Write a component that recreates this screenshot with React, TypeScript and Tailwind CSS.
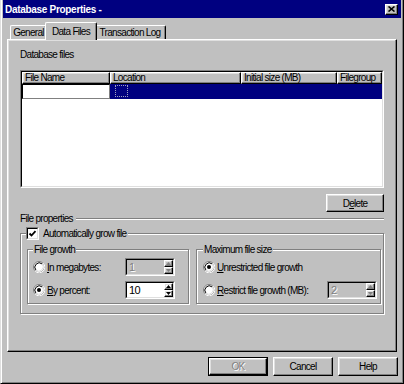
import React from 'react'

const raised =
  'border border-t-white border-l-white border-r-black border-b-black shadow-[inset_-1px_-1px_#808080,inset_1px_1px_#dfdfdf]'
const font = "font-['Liberation_Sans',Arial,sans-serif] text-[10px] tracking-[-0.7px] text-black"

function Radio({ checked }: { checked?: boolean }) {
  return (
    <svg width="12" height="12" viewBox="0 0 12 12" className="shrink-0">
      <circle cx="6" cy="6" r="5.5" fill="white" stroke="#808080" />
      <path d="M10.2 2.2 A5.5 5.5 0 0 1 2.2 10.2" fill="none" stroke="white" />
      <path d="M2.9 9.1 A4.4 4.4 0 0 1 9.1 2.9" fill="none" stroke="black" />
      <path d="M9.1 2.9 A4.4 4.4 0 0 1 2.9 9.1" fill="none" stroke="#dfdfdf" />
      {checked && <circle cx="6" cy="6" r="2" fill="black" />}
    </svg>
  )
}

function Checkbox() {
  return (
    <div className="w-[13px] h-[13px] border border-t-[#808080] border-l-[#808080] border-r-white border-b-white shrink-0">
      <div className="w-full h-full bg-white border border-t-black border-l-black border-r-[#dfdfdf] border-b-[#dfdfdf] flex items-center justify-center">
        <svg width="9" height="9" viewBox="0 0 9 9">
          <path d="M1.5 4.5 L3.5 6.5 L7.5 2.2" fill="none" stroke="black" strokeWidth="1.8" />
        </svg>
      </div>
    </div>
  )
}

function Arrow({ up, disabled }: { up?: boolean; disabled?: boolean }) {
  return (
    <div className={`flex-1 flex items-center justify-center ${raised}`}>
      <svg width="5" height="3" viewBox="0 0 5 3">
        <path d={up ? 'M2.5 0 L5 3 L0 3 Z' : 'M0 0 L5 0 L2.5 3 Z'} fill={disabled ? '#808080' : 'black'} />
      </svg>
    </div>
  )
}

function Spin({ value, disabled, width }: { value: string; disabled?: boolean; width: string }) {
  return (
    <div className={`${width} h-[18px] flex border border-t-[#808080] border-l-[#808080] border-r-white border-b-white`}>
      <div
        className={`flex-1 flex border border-t-black border-l-black border-r-[#dfdfdf] border-b-[#dfdfdf] ${
          disabled ? 'bg-[#c0c0c0]' : 'bg-white'
        }`}
      >
        <span
          className={`flex-1 pl-[2px] leading-[14px] text-[11px] ${
            disabled ? 'text-[#808080] [text-shadow:1px_1px_0_#fff]' : 'text-black'
          }`}
        >
          {value}
        </span>
        <div className="w-[9px] flex flex-col">
          <Arrow up disabled={disabled} />
          <Arrow disabled={disabled} />
        </div>
      </div>
    </div>
  )
}

export default function App() {
  return (
    <div
      className={`${font} w-[404px] h-[384px] bg-[#c0c0c0] flex flex-col px-[1px] border-x border-b border-l-[#dfdfdf] border-r-black border-b-black shadow-[inset_1px_0_white,inset_-1px_-1px_#808080]`}
    >
      {/* Title bar */}
      <div className="h-[18px] mx-[1px] bg-[#000080] flex items-center justify-between pl-[2px] pr-[3px]">
        <span className="text-white font-bold text-[10px] tracking-[-0.3px]">Database Properties -</span>
        <button className={`w-[13px] h-[11px] bg-[#c0c0c0] flex items-center justify-center ${raised}`}>
          <svg width="7" height="6" viewBox="0 0 7 6">
            <path d="M0.5 0.5 L6.5 5.5 M6.5 0.5 L0.5 5.5" stroke="black" strokeWidth="1.6" />
          </svg>
        </button>
      </div>

      {/* Tabs */}
      <div className="mt-[4px] ml-[8px] h-[17px] flex items-end">
        <div className="w-[37px] h-[14px] border-t border-l border-white border-r border-r-black rounded-t-[2px] flex items-center justify-center shadow-[inset_-1px_0_#808080]">
          General
        </div>
        <div className="relative z-10 -mx-[2px] w-[52px] h-[18px] -mb-[1px] pb-[1px] bg-[#c0c0c0] border-t border-l border-white border-r border-r-black rounded-t-[2px] flex items-center justify-center shadow-[inset_-1px_0_#808080]">
          Data Files
        </div>
        <div className="w-[71px] h-[14px] border-t border-white border-r border-r-black rounded-t-[2px] flex items-center justify-center shadow-[inset_-1px_0_#808080]">
          Transaction Log
        </div>
      </div>

      {/* Panel */}
      <div className={`ml-[5px] w-[390px] h-[313px] ${raised} pt-[8px] px-[12px]`}>
        <div className="h-[13px] leading-[13px]">Database files</div>

        <div className="mt-[9px] h-[118px] border border-t-[#808080] border-l-[#808080] border-r-white border-b-white">
          <div className="h-full bg-white border border-t-black border-l-black border-r-[#dfdfdf] border-b-[#dfdfdf]">
            <div className="flex h-[12px] leading-[10px]">
              {[
                ['File Name', 'w-[88px]'],
                ['Location', 'w-[131px]'],
                ['Initial size (MB)', 'w-[96px]'],
                ['Filegroup', 'flex-1'],
              ].map(([label, w]) => (
                <div key={label} className={`${w} bg-[#c0c0c0] px-[2px] ${raised}`}>
                  {label}
                </div>
              ))}
            </div>
            <div className="flex h-[15px] bg-[#000080]">
              <div className="w-[88px] bg-white border border-t-black border-l-black border-r-[#808080] border-b-[#808080]" />
              <div className="ml-[5px] mt-[1px] w-[13px] h-[12px] border border-dotted border-[#a0a0c0]" />
            </div>
          </div>
        </div>

        <div className="mt-[6px] flex justify-end">
          <button className={`w-[58px] h-[18px] bg-[#c0c0c0] ${raised}`}>
            D<span className="underline">e</span>lete
          </button>
        </div>

        <div className="h-[13px] flex items-center">
          <span>File properties</span>
          <div className="flex-1 ml-[3px] border-t border-t-[#808080] border-b border-b-white" />
        </div>

        <fieldset className="mt-[2px] border border-[#808080] shadow-[1px_1px_0_#fff,inset_1px_1px_0_#fff] pl-[6px] pb-[9px]">
          <legend className="-ml-[1px] pr-[2px] bg-[#c0c0c0] flex items-center gap-[4px] h-[13px]">
            <Checkbox />
            <span>Automatically grow file</span>
          </legend>
          <div className="pt-[3px] flex gap-[7px]">
            <fieldset className="w-[162px] border border-[#808080] shadow-[1px_1px_0_#fff,inset_1px_1px_0_#fff] pl-[5px] pt-[1px] pb-[3px]">
              <legend className="px-[1px] h-[13px] leading-[13px] bg-[#c0c0c0]">File growth</legend>
              <div className="flex flex-col gap-[3px]">
                <div className="h-[20px] flex items-center">
                  <div className="w-[92px] flex items-center gap-[2px]">
                    <Radio />
                    <span>
                      <span className="underline">I</span>n megabytes:
                    </span>
                  </div>
                  <Spin value="1" disabled width="w-[50px]" />
                </div>
                <div className="h-[20px] flex items-center">
                  <div className="w-[92px] flex items-center gap-[2px]">
                    <Radio checked />
                    <span>
                      <span className="underline">B</span>y percent:
                    </span>
                  </div>
                  <Spin value="10" width="w-[50px]" />
                </div>
              </div>
            </fieldset>

            <fieldset className="w-[185px] border border-[#808080] shadow-[1px_1px_0_#fff,inset_1px_1px_0_#fff] pl-[6px] pt-[1px] pb-[3px]">
              <legend className="px-[1px] h-[13px] leading-[13px] bg-[#c0c0c0]">Maximum file size</legend>
              <div className="flex flex-col gap-[3px]">
                <div className="h-[20px] flex items-center gap-[2px]">
                  <Radio checked />
                  <span>
                    <span className="underline">U</span>nrestricted file growth
                  </span>
                </div>
                <div className="h-[20px] flex items-center">
                  <div className="w-[124px] flex items-center gap-[2px]">
                    <Radio />
                    <span>
                      <span className="underline">R</span>estrict file growth (MB):
                    </span>
                  </div>
                  <Spin value="2" disabled width="w-[50px]" />
                </div>
              </div>
            </fieldset>
          </div>
        </fieldset>
      </div>

      {/* Dialog buttons */}
      <div className="mt-[5px] mr-[4px] flex justify-end gap-[5px]">
        <div className="w-[60px] h-[19px] border border-black">
          <button
            className={`w-full h-full bg-[#c0c0c0] text-[#808080] [text-shadow:1px_1px_0_#fff] ${raised}`}
          >
            OK
          </button>
        </div>
        <button className={`w-[60px] h-[19px] bg-[#c0c0c0] ${raised}`}>Cancel</button>
        <button className={`w-[60px] h-[19px] bg-[#c0c0c0] ${raised}`}>Help</button>
      </div>
    </div>
  )
}
